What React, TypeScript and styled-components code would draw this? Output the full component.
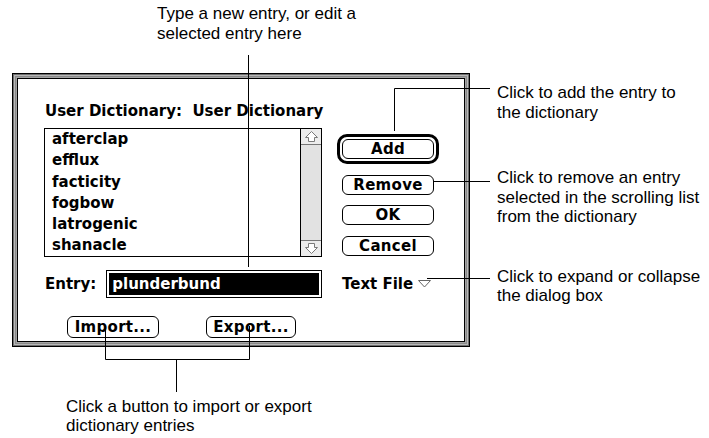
import styled, { createGlobalStyle } from "styled-components";

const GlobalStyle = createGlobalStyle`
  html, body {
    margin: 0;
    padding: 0;
    background: #fff;
  }
  body {
    width: 709px;
    height: 438px;
    overflow: hidden;
  }
`;

const chicago = `"DejaVu Sans", "Liberation Sans", sans-serif`;
const helv = `"Liberation Sans", Arial, sans-serif`;

const Page = styled.div`
  position: relative;
  width: 709px;
  height: 438px;
  display: flex;
  flex-direction: column;
  font-family: ${helv};
  color: #000;
`;

const Caption = styled.div<{ $left?: number; $top?: number }>`
  margin-left: ${(p) => p.$left || 0}px;
  margin-top: ${(p) => p.$top || 0}px;
  font-size: 17px;
  line-height: 19.5px;
  white-space: nowrap;
`;

const Middle = styled.div`
  display: flex;
  align-items: flex-start;
  margin-top: 30px;
  margin-left: 12px;
`;

const Callouts = styled.div`
  display: flex;
  flex-direction: column;
  margin-left: 27px;
`;

// the double frame of a modal dialog
const Frame = styled.div`
  width: 458px;
  height: 274px;
  box-sizing: border-box;
  border: 1px solid #000;
  padding: 4px;
  background: #a4a4a4;
  box-shadow: inset 0 0 0 1px #6e6e6e, inset 0 0 0 2px #b8b8b8, inset 0 0 0 3px #8a8a8a;
`;

const DialogBody = styled.div`
  height: 100%;
  box-sizing: border-box;
  border: 1px solid #000;
  background: #fff;
  padding: 23px 0 0 26px;
  display: grid;
  grid-template-columns: 278px 102px;
  column-gap: 15px;
  align-items: start;
  font-family: ${chicago};
  font-weight: bold;
  font-size: 15px;
  line-height: 18px;
`;

const Title = styled.div`
  grid-column: 1 / -1;
  margin-left: 1px;
  margin-bottom: 5px;
  white-space: pre;
`;

const ListBox = styled.div`
  height: 129px;
  box-sizing: border-box;
  border: 1px solid #000;
  display: flex;
`;

const Items = styled.div`
  flex: 1;
  padding-left: 7px;
  line-height: 21.3px;
`;

const ScrollBar = styled.div`
  width: 20px;
  border-left: 1px solid #000;
  display: flex;
  flex-direction: column;
  background: #e2e2e2;
`;

const ArrowBox = styled.div<{ $down?: boolean }>`
  height: 15px;
  display: flex;
  align-items: center;
  justify-content: center;
  background: #ececec;
  border-top: ${(p) => (p.$down ? "1px solid #777" : "none")};
  border-bottom: ${(p) => (p.$down ? "none" : "1px solid #777")};
`;

const Track = styled.div`
  flex: 1;
`;

const ButtonStack = styled.div`
  padding-top: 6px;
  display: flex;
  flex-direction: column;
  gap: 10.5px;
`;

const DefaultRing = styled.div`
  border: 3px solid #000;
  border-radius: 10px;
  padding: 2px;
`;

const MacButton = styled.div<{ $w?: number; $h?: number }>`
  width: ${(p) => p.$w || 92}px;
  height: ${(p) => p.$h || 20}px;
  box-sizing: border-box;
  border: 1px solid #000;
  border-radius: 6px;
  background: #fff;
  display: flex;
  align-items: center;
  justify-content: center;
  letter-spacing: 0.3px;
`;

const SideButton = styled(MacButton)`
  margin-left: 5px;
`;

const EntryRow = styled.div`
  margin-top: 10px;
  display: flex;
  align-items: center;
  gap: 10px;
  padding-left: 1px;
`;

const EntryField = styled.div`
  flex: 1;
  height: 28px;
  box-sizing: border-box;
  border: 1px solid #000;
  padding: 2px;
  display: flex;
`;

const Selected = styled.div`
  flex: 1;
  background: #000;
  color: #fff;
  padding-left: 3px;
  display: flex;
  align-items: center;
`;

const TextFile = styled.div`
  margin-top: 10px;
  height: 28px;
  padding-left: 5px;
  display: flex;
  align-items: center;
  gap: 5px;
`;

const BottomRow = styled.div`
  margin-top: 15px;
  padding-left: 23px;
  display: flex;
  gap: 47px;
`;

const Leaders = styled.svg`
  position: absolute;
  left: 0;
  top: 0;
  pointer-events: none;
`;

const UpArrow = ({ down }: { down?: boolean }) => (
  <svg width="13" height="11" viewBox="0 0 13 11" style={down ? { transform: "rotate(180deg)" } : undefined}>
    <path d="M6.5 0.5 L12.5 6.5 H9.5 V10.5 H3.5 V6.5 H0.5 Z" fill="#fff" stroke="#7a7a7a" strokeWidth="1" />
  </svg>
);

const words = ["afterclap", "efflux", "facticity", "fogbow", "latrogenic", "shanacle"];

const App = () => {
  return (
    <Page>
      <GlobalStyle />
      <Caption $left={157} $top={4}>
        Type a new entry, or edit a
        <br />
        selected entry here
      </Caption>

      <Middle>
        <Frame>
          <DialogBody>
            <Title>{"User Dictionary:  User Dictionary"}</Title>

            <ListBox>
              <Items>
                {words.map((w) => (
                  <div key={w}>{w}</div>
                ))}
              </Items>
              <ScrollBar>
                <ArrowBox>
                  <UpArrow />
                </ArrowBox>
                <Track />
                <ArrowBox $down>
                  <UpArrow down />
                </ArrowBox>
              </ScrollBar>
            </ListBox>
            <ButtonStack>
              <DefaultRing>
                <MacButton>Add</MacButton>
              </DefaultRing>
              <SideButton>Remove</SideButton>
              <SideButton>OK</SideButton>
              <SideButton>Cancel</SideButton>
            </ButtonStack>

            <EntryRow>
              <span>Entry:</span>
              <EntryField>
                <Selected>plunderbund</Selected>
              </EntryField>
            </EntryRow>
            <TextFile>
              <span>Text File</span>
              <svg width="13" height="8" viewBox="0 0 13 8">
                <path d="M0.5 0.5 H12.5 L6.5 7 Z" fill="#fff" stroke="#666" strokeWidth="1" />
              </svg>
            </TextFile>

            <BottomRow>
              <MacButton $h={22}>Import...</MacButton>
              <MacButton $w={90} $h={22}>Export...</MacButton>
            </BottomRow>
          </DialogBody>
        </Frame>

        <Callouts>
          <Caption $top={10}>
            Click to add the entry to
            <br />
            the dictionary
          </Caption>
          <Caption $top={46}>
            Click to remove an entry
            <br />
            selected in the scrolling list
            <br />
            from the dictionary
          </Caption>
          <Caption $top={40}>
            Click to expand or collapse
            <br />
            the dialog box
          </Caption>
        </Callouts>
      </Middle>

      <Caption $left={66} $top={49.5}>
        Click a button to import or export
        <br />
        dictionary entries
      </Caption>

      <Leaders width="709" height="438" viewBox="0 0 709 438">
        <g fill="none" stroke="#000" strokeWidth="1">
          <path d="M248.5 55 V267" />
          <path d="M490 88.5 H394.5 V131" />
          <path d="M434 181.5 H490" />
          <path d="M427 278.5 H490" />
          <path d="M105.5 326 V359.5 H249.5 V326" />
          <path d="M176.5 359.5 V392" />
        </g>
      </Leaders>
    </Page>
  );
};

export default App;
